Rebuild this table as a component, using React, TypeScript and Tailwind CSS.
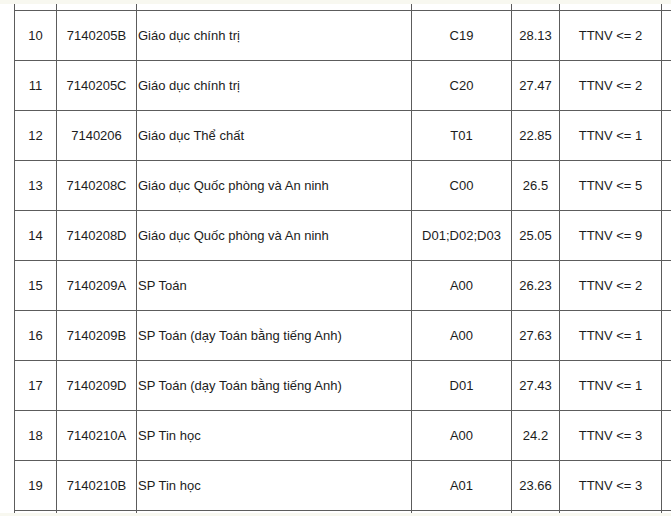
const rows = [
  ['10', '7140205B', 'Giáo dục chính trị', 'C19', '28.13', 'TTNV <= 2'],
  ['11', '7140205C', 'Giáo dục chính trị', 'C20', '27.47', 'TTNV <= 2'],
  ['12', '7140206', 'Giáo dục Thể chất', 'T01', '22.85', 'TTNV <= 1'],
  ['13', '7140208C', 'Giáo dục Quốc phòng và An ninh', 'C00', '26.5', 'TTNV <= 5'],
  ['14', '7140208D', 'Giáo dục Quốc phòng và An ninh', 'D01;D02;D03', '25.05', 'TTNV <= 9'],
  ['15', '7140209A', 'SP Toán', 'A00', '26.23', 'TTNV <= 2'],
  ['16', '7140209B', 'SP Toán (dạy Toán bằng tiếng Anh)', 'A00', '27.63', 'TTNV <= 1'],
  ['17', '7140209D', 'SP Toán (dạy Toán bằng tiếng Anh)', 'D01', '27.43', 'TTNV <= 1'],
  ['18', '7140210A', 'SP Tin học', 'A00', '24.2', 'TTNV <= 3'],
  ['19', '7140210B', 'SP Tin học', 'A01', '23.66', 'TTNV <= 3'],
];

const gridCols = 'grid grid-cols-[42px_80px_275px_100px_48px_103px]';

function StubRow({ height, top }: { height: string; top?: boolean }) {
  return (
    <div className={`${gridCols} ${height} ${top ? '' : 'border-t border-[#5c5c5c]'}`}>
      {[0, 1, 2, 3, 4, 5].map(i => (
        <div key={i} className={`border-l border-[#5c5c5c] ${i === 5 ? 'border-r' : ''}`} />
      ))}
    </div>
  );
}

export default function App() {
  return (
    <div className="w-[671px] h-[516px] bg-white flex flex-col font-['Liberation_Sans',Arial,sans-serif] text-[13px] text-[#1c1c1c]">
      {/* Top strip */}
      <div className="h-[4px] bg-[#f8f8f0]" />

      <div className="flex-1 pl-[14px]">
        <StubRow height="h-[6px]" top />

        {rows.map(r => (
          <div key={r[0]} className={`${gridCols} h-[50px] border-t border-[#5c5c5c]`}>
            <div className="border-l border-[#5c5c5c] flex items-center justify-center">{r[0]}</div>
            <div className="border-l border-[#5c5c5c] flex items-center justify-center">{r[1]}</div>
            <div className="border-l border-[#5c5c5c] flex items-center pl-[1px] whitespace-nowrap">{r[2]}</div>
            <div className="border-l border-[#5c5c5c] flex items-center justify-center">{r[3]}</div>
            <div className="border-l border-[#5c5c5c] flex items-center justify-center">{r[4]}</div>
            <div className="border-l border-r border-[#5c5c5c] flex items-center justify-center">{r[5]}</div>
          </div>
        ))}

        <StubRow height="h-[3px]" />
      </div>

      {/* Bottom strip */}
      <div className="h-[3px] bg-[#f8f8f0]" />
    </div>
  );
}
